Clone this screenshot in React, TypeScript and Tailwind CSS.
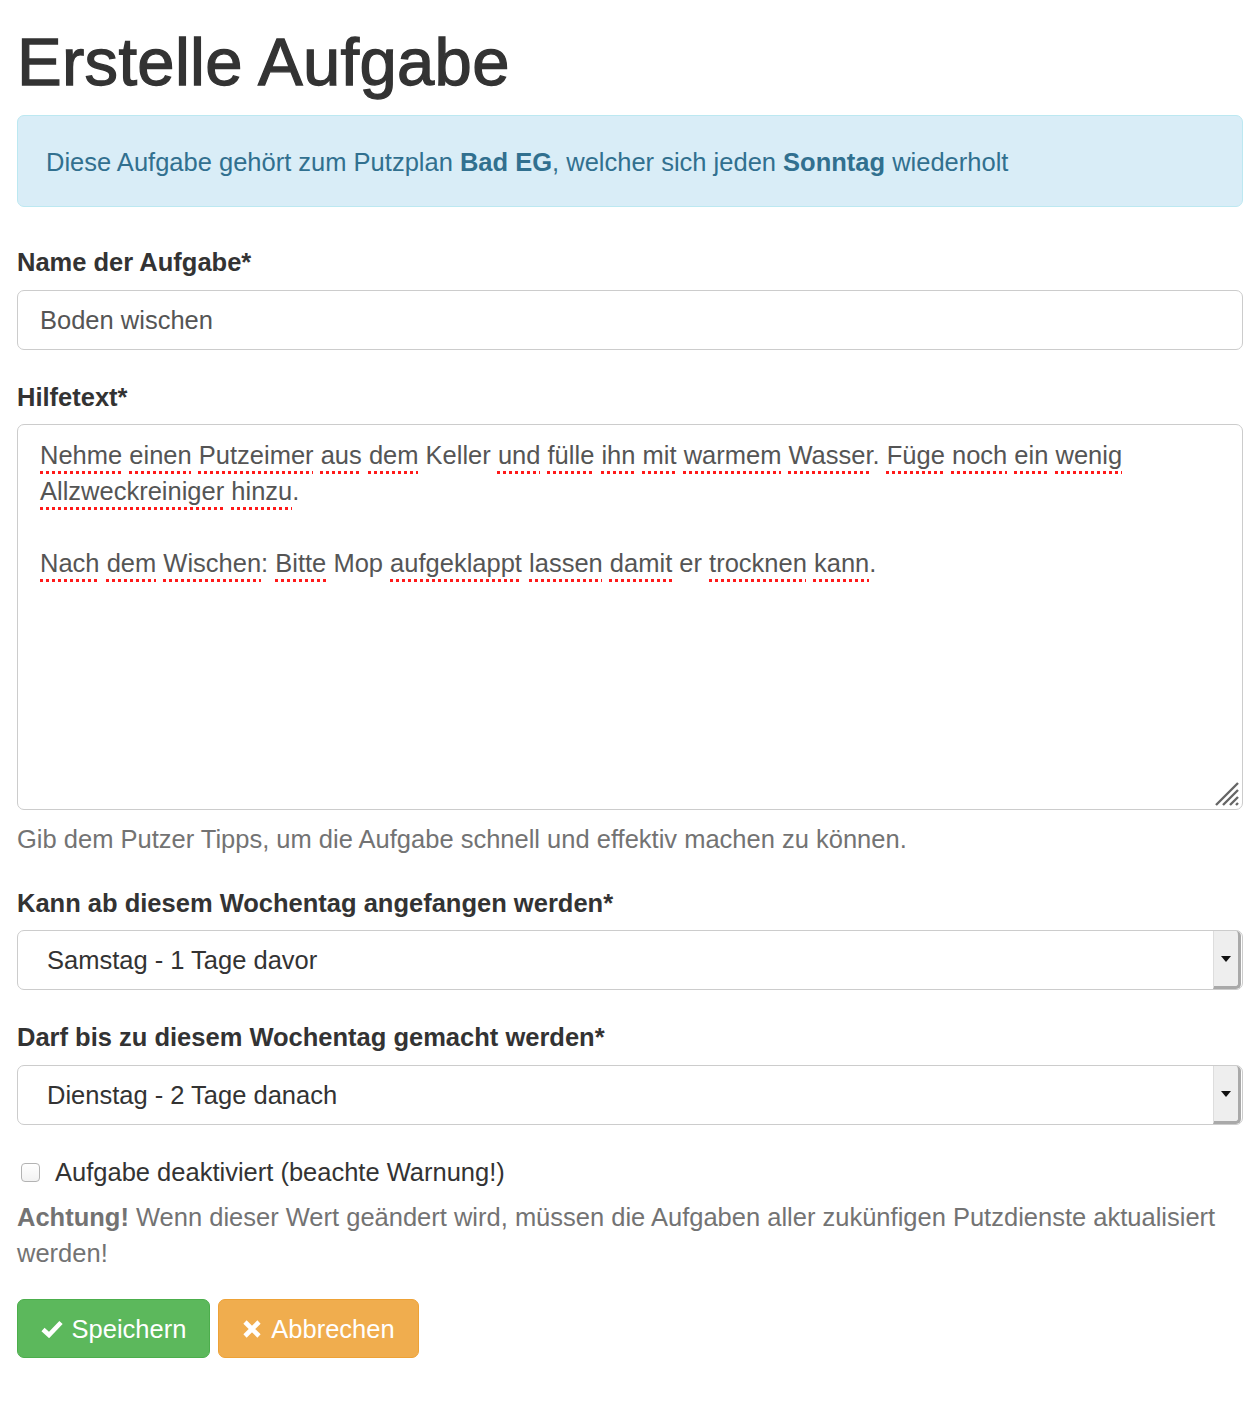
import React from 'react';

const font = { fontFamily: '"Liberation Sans", Arial, sans-serif' };

// spellchecked word (red dotted underline)
function W({ children }: { children: React.ReactNode }) {
  return (
    <span className="underline decoration-dotted decoration-[#ff1a1a] decoration-[2.5px] underline-offset-[7px]">
      {children}
    </span>
  );
}

function FakeSelect({ value }: { value: string }) {
  return (
    <div className="flex h-[60px] items-stretch rounded-[7px] border border-[#ccc] bg-white">
      <div className="flex flex-1 items-center pl-[29px] text-[#333]">{value}</div>
      <div className="mr-[1px] flex w-[28px] items-center justify-center border-r-[3px] border-b-[3px] border-l border-l-[#ddd] border-r-[#a9a9a9] border-b-[#a9a9a9] bg-[#eee] rounded-r-[5px]">
        <svg width="10" height="6" viewBox="0 0 10 6">
          <path d="M0 0 H10 L5 6 Z" fill="#111" />
        </svg>
      </div>
    </div>
  );
}

export default function App() {
  return (
    <div className="min-h-[1406px] bg-white pl-[17px] pr-[13px] text-[25.5px] leading-[36px] text-[#333]" style={font}>
      <h1 className="pt-[25px] text-[67px] leading-[74px] tracking-[0.3px] text-[#333] [-webkit-text-stroke:1.3px_#333]">
        Erstelle Aufgabe
      </h1>

      <div className="mt-[16px] rounded-[7px] border border-[#bce8f1] bg-[#d9edf7] px-[28px] pt-[28px] pb-[26px] text-[#31708f]">
        Diese Aufgabe gehört zum Putzplan <b>Bad EG</b>, welcher sich jeden <b>Sonntag</b> wiederholt
      </div>

      <label className="mt-[37px] block font-bold">Name der Aufgabe*</label>
      <div className="mt-[10px] flex h-[60px] items-center rounded-[7px] border border-[#ccc] px-[22px] text-[#555]">
        Boden wischen
      </div>

      <label className="mt-[29px] block font-bold">Hilfetext*</label>
      <div className="relative mt-[9px] h-[386px] rounded-[7px] border border-[#ccc] px-[22px] pt-[12px] whitespace-nowrap text-[#555]">
        <W>Nehme</W> <W>einen</W> <W>Putzeimer</W> <W>aus</W> <W>dem</W> Keller <W>und</W> <W>fülle</W> <W>ihn</W>{' '}
        <W>mit</W> <W>warmem</W> <W>Wasser</W>. <W>Füge</W> <W>noch</W> <W>ein</W> <W>wenig</W>
        <br />
        <W>Allzweckreiniger</W> <W>hinzu</W>.
        <br />
        <br />
        <W>Nach</W> <W>dem</W> <W>Wischen</W>: <W>Bitte</W> Mop <W>aufgeklappt</W> <W>lassen</W> <W>damit</W> er{' '}
        <W>trocknen</W> <W>kann</W>.
        <svg className="absolute right-[2px] bottom-[2px]" width="28" height="28" viewBox="0 0 28 28">
          <path d="M26 4 L4 26 M26 11 L11 26 M26 18 L18 26 M26 24 L24 26" stroke="#666" strokeWidth="2.4" />
        </svg>
      </div>
      <p className="mt-[11px] text-[#737373]">
        Gib dem Putzer Tipps, um die Aufgabe schnell und effektiv machen zu können.
      </p>

      <label className="mt-[28px] block font-bold">Kann ab diesem Wochentag angefangen werden*</label>
      <div className="mt-[9px]">
        <FakeSelect value="Samstag - 1 Tage davor" />
      </div>

      <label className="mt-[29px] block font-bold">Darf bis zu diesem Wochentag gemacht werden*</label>
      <div className="mt-[10px]">
        <FakeSelect value="Dienstag - 2 Tage danach" />
      </div>

      <label className="mt-[29px] flex items-center">
        <span className="ml-[4px] mr-[15px] block h-[19px] w-[19px] shrink-0 rounded-[4px] border border-[#b3b3b3] bg-gradient-to-b from-white to-[#f2f2f2]" />
        Aufgabe deaktiviert (beachte Warnung!)
      </label>
      <p className="mt-[9px] text-[#737373]">
        <b>Achtung!</b> Wenn dieser Wert geändert wird, müssen die Aufgaben aller zukünfigen Putzdienste aktualisiert
        werden!
      </p>

      <div className="mt-[28px] flex gap-[8px]">
        <button className="flex h-[59px] w-[193px] items-center justify-center gap-[9px] rounded-[7px] border border-[#4cae4c] bg-[#5cb85c] text-white">
          <svg width="22" height="18" viewBox="0 0 22 18">
            <path d="M2 9.5 L8 15 L20 2.5" fill="none" stroke="#fff" strokeWidth="4.6" />
          </svg>
          Speichern
        </button>
        <button className="flex h-[59px] w-[201px] items-center justify-center gap-[9px] rounded-[7px] border border-[#eea236] bg-[#f0ad4e] text-white">
          <svg width="20" height="20" viewBox="0 0 20 20">
            <path d="M3 3 L17 17 M17 3 L3 17" fill="none" stroke="#fff" strokeWidth="4.6" />
          </svg>
          Abbrechen
        </button>
      </div>
    </div>
  );
}
